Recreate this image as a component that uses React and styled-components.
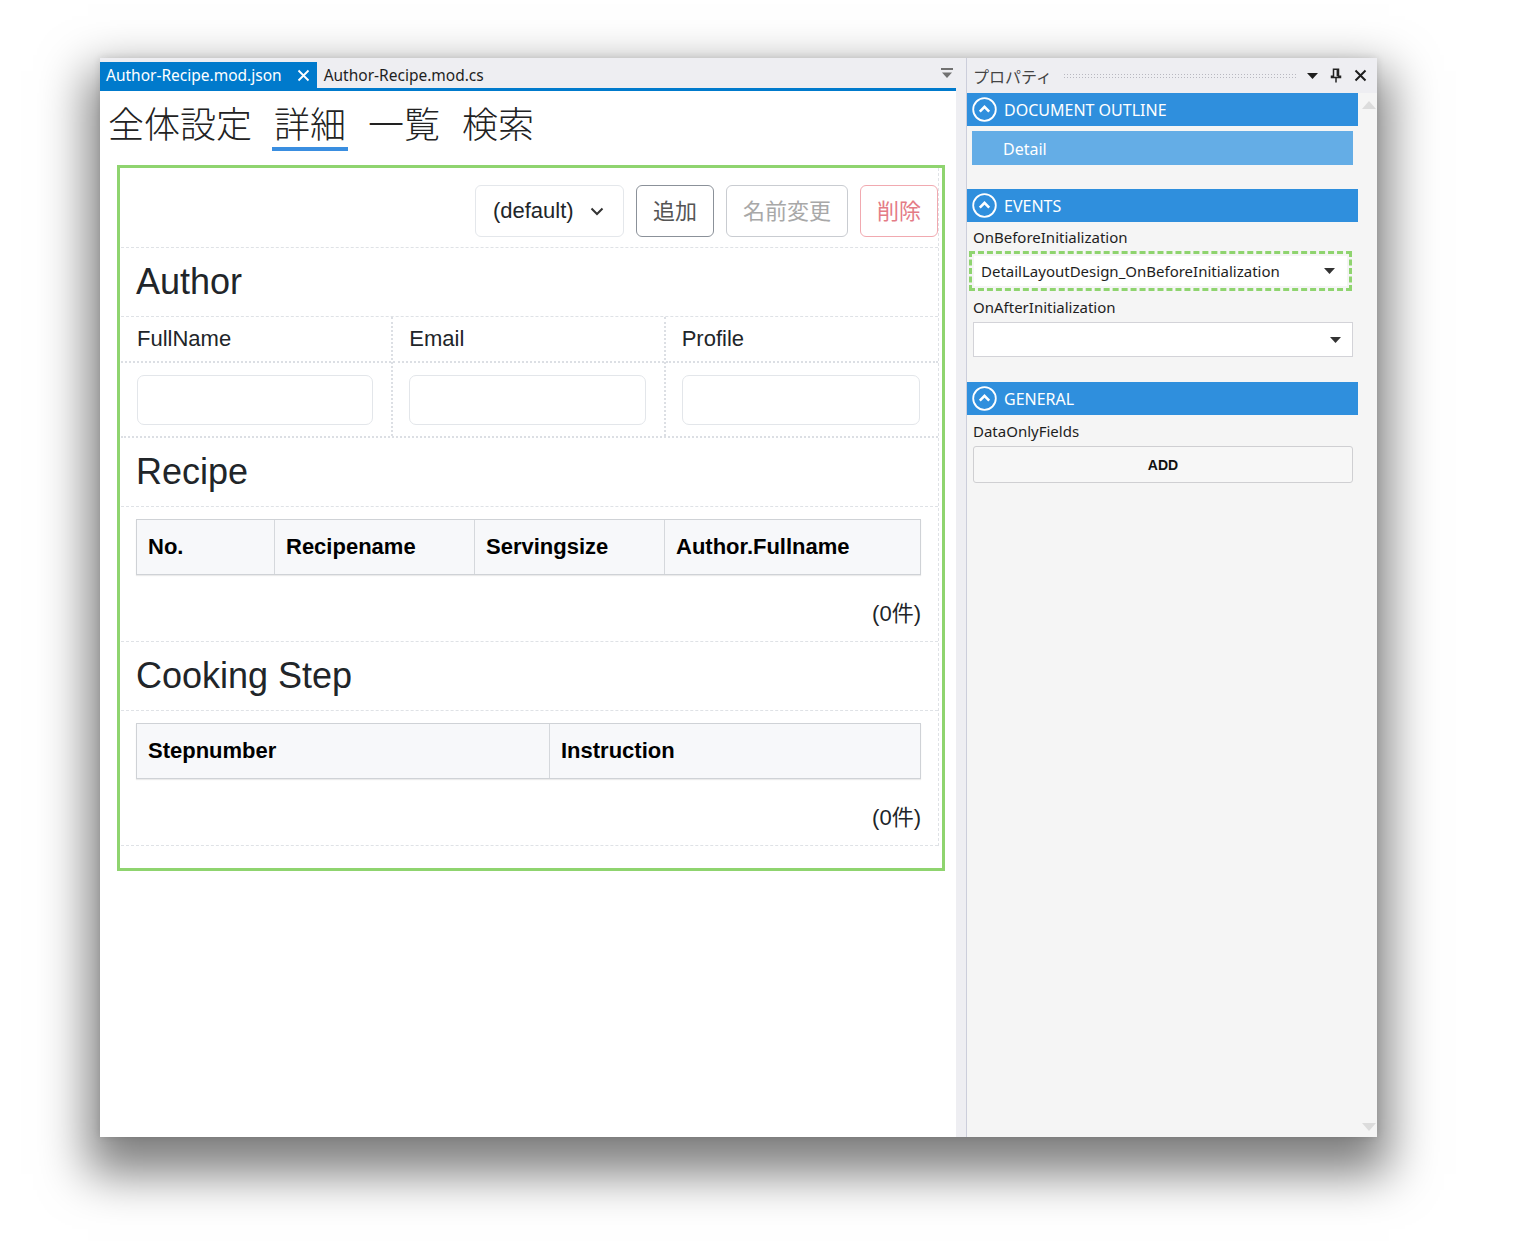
import React from "react";
import styled, { createGlobalStyle } from "styled-components";

const GlobalStyle = createGlobalStyle`
  html, body {
    margin: 0;
    padding: 0;
    background: #fff;
  }
  body {
    font-family: "Liberation Sans", "Noto Sans CJK JP", sans-serif;
    color: #212529;
  }
`;

const ui = `"Noto Sans", "Noto Sans CJK JP", sans-serif`;
const jp = `"Noto Sans CJK JP", sans-serif`;
const web = `"Liberation Sans", "Noto Sans CJK JP", sans-serif`;

const Page = styled.div`
  padding: 58px 0 140px 100px;
`;

const Window = styled.div`
  width: 1277px;
  height: 1079px;
  display: flex;
  background: #fff;
  box-shadow: 0 25px 45px 12px rgba(0, 0, 0, 0.5), 0 0 8px rgba(0, 0, 0, 0.12);
`;

/* ---------- editor ---------- */

const Editor = styled.div`
  width: 856px;
  display: flex;
  flex-direction: column;
  background: #fff;
`;

const DocTabs = styled.div`
  height: 30px;
  background: #eeeef2;
  border-bottom: 3px solid #007acc;
  display: flex;
  align-items: flex-end;
  padding-right: 3px;
`;

const DocTab = styled.div`
  height: 26px;
  display: flex;
  align-items: center;
  gap: 15px;
  padding: 0 7px 0 6px;
  font-family: ${ui};
  font-size: 15.5px;
  color: ${({ $active }) => ($active ? "#fff" : "#1e1e1e")};
  background: ${({ $active }) => ($active ? "#007acc" : "transparent")};
  margin-right: 1px;
`;

const TabFiller = styled.div`
  flex: 1;
`;

const Overflow = styled.div`
  align-self: center;
  display: flex;
  padding-top: 2px;
`;

const DesignTabs = styled.div`
  display: flex;
  gap: 18px;
  padding: 9px 0 0 6px;
`;

const DesignTab = styled.div`
  font-family: ${jp};
  font-weight: 300;
  font-size: 36px;
  line-height: 44px;
  padding: 0 2px 3px;
  color: #222;
  border-bottom: 4px solid ${({ $active }) => ($active ? "#3a8ee0" : "transparent")};
`;

const Canvas = styled.div`
  margin: 14px 11px 0 17px;
  border: 3px solid #8fd46f;
  padding: 0 3px 22px 1px;
`;

const Body = styled.div`
  border-right: 1px dashed #dfe2e6;
`;

const Toolbar = styled.div`
  display: flex;
  justify-content: flex-end;
  gap: 12px;
  padding: 17px 0 10px;
  border-bottom: 1px dashed #dfe2e6;
`;

const Select = styled.div`
  width: 149px;
  height: 52px;
  box-sizing: border-box;
  border: 1px solid #e4e7eb;
  border-radius: 6px;
  display: flex;
  align-items: center;
  justify-content: space-between;
  padding: 0 19px 0 17px;
  font-family: ${web};
  font-size: 22px;
  color: #212529;
`;

const Button = styled.div`
  height: 52px;
  box-sizing: border-box;
  padding: 0 16px 5px;
  border: 1px solid ${({ $border }) => $border};
  border-radius: 6px;
  display: flex;
  align-items: center;
  font-family: ${jp};
  font-size: 22px;
  color: ${({ $color }) => $color};
  background: #fff;
`;

const Heading = styled.div`
  padding: 12px 15px 13px;
  font-family: ${web};
  font-size: 36px;
  line-height: 43px;
  color: #212529;
  border-bottom: 1px dashed #dfe2e6;
`;

const FieldGrid = styled.div`
  display: grid;
  grid-template-columns: repeat(3, 1fr);
  border-bottom: 2px dotted #dcdfe4;
`;

const FieldCell = styled.div`
  border-right: ${({ $last }) => ($last ? "none" : "2px dotted #dcdfe4")};
`;

const FieldLabel = styled.div`
  padding: 9px 16px;
  font-family: ${web};
  font-size: 22px;
  line-height: 26px;
  color: #212529;
  border-bottom: 2px dotted #dcdfe4;
`;

const Input = styled.div`
  height: 50px;
  box-sizing: border-box;
  margin: 12px 18px 11px 16px;
  border: 1px solid #e3e6ea;
  border-radius: 7px;
  background: #fff;
`;

const TableBlock = styled.div`
  padding: 12px 17px 14px 15px;
  border-bottom: 1px dashed #dfe2e6;
`;

const Table = styled.div`
  display: grid;
  grid-template-columns: ${({ $cols }) => $cols};
  border: 1px solid #cfd2d6;
  background: #f7f8fa;
  box-shadow: 0 1px 1px rgba(0, 0, 0, 0.08);
`;

const HeadCell = styled.div`
  height: 54px;
  display: flex;
  align-items: center;
  padding-left: 11px;
  font-family: ${web};
  font-weight: 700;
  font-size: 22px;
  color: #000;
  border-left: ${({ $first }) => ($first ? "none" : "1px solid #d5d8dc")};
`;

const Count = styled.div`
  margin-top: 26px;
  text-align: right;
  font-family: ${web};
  font-size: 22px;
  line-height: 26px;
  color: #212529;
`;

/* ---------- splitter + properties ---------- */

const Splitter = styled.div`
  width: 10px;
  background: #eeeef2;
`;

const Panel = styled.div`
  width: 410px;
  display: flex;
  flex-direction: column;
  border-left: 1px solid #cccedb;
  background: #f5f5f5;
`;

const PanelHeader = styled.div`
  height: 35px;
  background: #eeeef2;
  display: flex;
  align-items: center;
  padding: 0 10px 0 6px;
  font-family: ${jp};
  font-size: 16px;
  color: #444;
`;

const Grip = styled.div`
  flex: 1;
  height: 5px;
  margin: 0 10px 0 11px;
  background-image: radial-gradient(circle, #b8b8c0 0.8px, transparent 1px);
  background-size: 3px 3px;
`;

const HeaderIcons = styled.div`
  display: flex;
  align-items: center;
  gap: 12px;
`;

const PanelBody = styled.div`
  flex: 1;
  display: flex;
`;

const PanelContent = styled.div`
  width: 391px;
`;

const ScrollTrack = styled.div`
  flex: 1;
  display: flex;
  flex-direction: column;
  justify-content: space-between;
  align-items: center;
  padding: 8px 0 6px 2px;
`;

const SectionHeader = styled.div`
  height: 33px;
  background: #2f8fdd;
  display: flex;
  align-items: center;
  gap: 7px;
  padding-left: 5px;
  font-family: ${ui};
  font-size: 16px;
  color: #fff;
`;

const SectionBody = styled.div`
  padding: ${({ $pad }) => $pad};
`;

const OutlineItem = styled.div`
  height: 34px;
  background: #64ade6;
  display: flex;
  align-items: center;
  padding: 1px 0 0 31px;
  box-sizing: border-box;
  font-family: ${ui};
  font-size: 16px;
  color: #fff;
`;

const PropLabel = styled.div`
  font-family: ${ui};
  font-size: 15px;
  line-height: 22px;
  color: #1e1e1e;
  margin-top: ${({ $mt }) => $mt || 0}px;
`;

const Highlight = styled.div`
  margin: 3px 0 0 -4px;
  width: 383px;
  height: 40px;
  box-sizing: border-box;
  border: 3px dashed #8fd46f;
  padding: 2px;
  display: flex;
`;

const Dropdown = styled.div`
  flex: 1;
  height: ${({ $h }) => $h || 35}px;
  box-sizing: border-box;
  margin-top: ${({ $mt }) => $mt || 0}px;
  background: #fff;
  border: 1px solid ${({ $bare }) => ($bare ? "#fff" : "#d3d3d8")};
  display: flex;
  align-items: center;
  justify-content: space-between;
  padding: 0 11px 0 ${({ $bare }) => ($bare ? 6 : 10)}px;
  font-family: ${ui};
  font-size: 15px;
  color: #1e1e1e;
`;

const AddButton = styled.div`
  margin-top: 4px;
  height: 37px;
  box-sizing: border-box;
  border: 1px solid #cfcfd2;
  border-radius: 3px;
  background: #f7f7f7;
  display: flex;
  align-items: center;
  justify-content: center;
  font-family: ${web};
  font-weight: 700;
  font-size: 14px;
  color: #111;
`;

/* ---------- icons ---------- */

const CloseX = ({ color = "#fff", size = 13, w = 1.8 }) => (
  <svg width={size} height={size} viewBox="0 0 13 13">
    <path d="M1.5 1.5l10 10M11.5 1.5l-10 10" stroke={color} strokeWidth={w} />
  </svg>
);

const OverflowIcon = () => (
  <svg width="12" height="12" viewBox="0 0 12 12">
    <rect x="0" y="0" width="12" height="2" fill="#717171" />
    <path d="M1 4.5h10L6 10z" fill="#717171" />
  </svg>
);

const Caret = ({ color = "#333" }) => (
  <svg width="11" height="6" viewBox="0 0 11 6">
    <path d="M0 0h11L5.5 6z" fill={color} />
  </svg>
);

const Pin = () => (
  <svg width="12" height="15" viewBox="0 0 12 15">
    <path d="M3.5 1.2h5v7h2v1.3h-9V8.2h2z" fill="none" stroke="#222" strokeWidth="1.5" />
    <path d="M7.4 1.5v6.8" stroke="#222" strokeWidth="1.6" />
    <path d="M6 9.5v5" stroke="#222" strokeWidth="1.5" />
  </svg>
);

const Chevron = () => (
  <svg width="14" height="9" viewBox="0 0 14 9">
    <path d="M1.5 1.5l5.5 5.5 5.5-5.5" fill="none" stroke="#333" strokeWidth="2" />
  </svg>
);

const Collapse = () => (
  <svg width="25" height="25" viewBox="0 0 25 25">
    <circle cx="12.5" cy="12.5" r="11.3" fill="none" stroke="#fff" strokeWidth="1.8" />
    <path d="M7.8 14.6l4.7-4.7 4.7 4.7" fill="none" stroke="#fff" strokeWidth="2.6" />
  </svg>
);

const ScrollArrow = ({ down }) => (
  <svg width="14" height="8" viewBox="0 0 14 8">
    <path d={down ? "M0 0h14L7 8z" : "M0 8h14L7 0z"} fill="#dcdcdc" />
  </svg>
);

/* ---------- parts ---------- */

const fields = ["FullName", "Email", "Profile"];

function Section({ title, children }) {
  return (
    <>
      <SectionHeader>
        <Collapse />
        {title}
      </SectionHeader>
      {children}
    </>
  );
}

export default function App() {
  return (
    <>
      <GlobalStyle />
      <Page>
        <Window>
          <Editor>
            <DocTabs>
              <DocTab $active>
                Author-Recipe.mod.json
                <CloseX />
              </DocTab>
              <DocTab>Author-Recipe.mod.cs</DocTab>
              <TabFiller />
              <Overflow>
                <OverflowIcon />
              </Overflow>
            </DocTabs>

            <DesignTabs>
              <DesignTab>全体設定</DesignTab>
              <DesignTab $active>詳細</DesignTab>
              <DesignTab>一覧</DesignTab>
              <DesignTab>検索</DesignTab>
            </DesignTabs>

            <Canvas>
              <Body>
                <Toolbar>
                  <Select>
                    (default)
                    <Chevron />
                  </Select>
                  <Button $border="#8b9199" $color="#555">追加</Button>
                  <Button $border="#c9ccd1" $color="#a8a8a8">名前変更</Button>
                  <Button $border="#f1a9b0" $color="#e47c86">削除</Button>
                </Toolbar>

                <Heading>Author</Heading>
                <FieldGrid>
                  {fields.map((f, i) => (
                    <FieldCell key={f} $last={i === fields.length - 1}>
                      <FieldLabel>{f}</FieldLabel>
                      <Input />
                    </FieldCell>
                  ))}
                </FieldGrid>

                <Heading>Recipe</Heading>
                <TableBlock>
                  <Table $cols="137px 200px 190px 1fr">
                    <HeadCell $first>No.</HeadCell>
                    <HeadCell>Recipename</HeadCell>
                    <HeadCell>Servingsize</HeadCell>
                    <HeadCell>Author.Fullname</HeadCell>
                  </Table>
                  <Count>(0件)</Count>
                </TableBlock>

                <Heading>Cooking Step</Heading>
                <TableBlock>
                  <Table $cols="412px 1fr">
                    <HeadCell $first>Stepnumber</HeadCell>
                    <HeadCell>Instruction</HeadCell>
                  </Table>
                  <Count>(0件)</Count>
                </TableBlock>
              </Body>
            </Canvas>
          </Editor>

          <Splitter />

          <Panel>
            <PanelHeader>
              プロパティ
              <Grip />
              <HeaderIcons>
                <Caret color="#1e1e1e" />
                <Pin />
                <CloseX color="#1e1e1e" size={13} w={2} />
              </HeaderIcons>
            </PanelHeader>
            <PanelBody>
              <PanelContent>
                <Section title="DOCUMENT OUTLINE">
                  <SectionBody $pad="5px 5px 24px 5px">
                    <OutlineItem>Detail</OutlineItem>
                  </SectionBody>
                </Section>

                <Section title="EVENTS">
                  <SectionBody $pad="4px 5px 25px 6px">
                    <PropLabel>OnBeforeInitialization</PropLabel>
                    <Highlight>
                      <Dropdown $bare $h={30}>
                        DetailLayoutDesign_OnBeforeInitialization
                        <Caret />
                      </Dropdown>
                    </Highlight>
                    <PropLabel $mt={5}>OnAfterInitialization</PropLabel>
                    <Dropdown $mt={4}>
                      <span />
                      <Caret />
                    </Dropdown>
                  </SectionBody>
                </Section>

                <Section title="GENERAL">
                  <SectionBody $pad="5px 5px 0 6px">
                    <PropLabel>DataOnlyFields</PropLabel>
                    <AddButton>ADD</AddButton>
                  </SectionBody>
                </Section>
              </PanelContent>
              <ScrollTrack>
                <ScrollArrow />
                <ScrollArrow down />
              </ScrollTrack>
            </PanelBody>
          </Panel>
        </Window>
      </Page>
    </>
  );
}
